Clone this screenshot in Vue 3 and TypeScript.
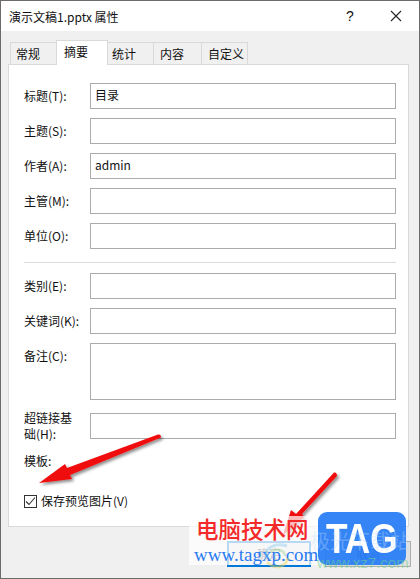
<script setup lang="ts">
interface Row { label: string; value?: string; tall?: boolean; wrap?: boolean }
const tabs: string[] = ['常规', '摘要', '统计', '内容', '自定义']
const top: Row[] = [
  { label: '标题(T):', value: '目录' },
  { label: '主题(S):' },
  { label: '作者(A):', value: 'admin' },
  { label: '主管(M):' },
  { label: '单位(O):' },
]
const bottom: Row[] = [
  { label: '类别(E):' },
  { label: '关键词(K):' },
  { label: '备注(C):', tall: true },
  { label: '超链接基础(H):', wrap: true },
]
</script>

<template>
  <div class="win">
    <header class="title">
      <span class="title-text">演示文稿1.pptx 属性</span>
      <span class="help">?</span>
      <svg class="close" width="12" height="12" viewBox="0 0 12 12"><path d="M1 1l10 10M11 1L1 11" stroke="#222" stroke-width="1.1" fill="none" /></svg>
    </header>
    <div class="body">
      <nav class="tabs">
        <div v-for="(t, i) in tabs" :key="t" class="tab" :class="{ active: i === 1 }">{{ t }}</div>
      </nav>
      <section class="panel">
        <div class="rows">
          <div v-for="r in top" :key="r.label" class="row">
            <label class="lab">{{ r.label }}</label>
            <div class="input">{{ r.value }}</div>
          </div>
        </div>
        <div class="divider"></div>
        <div class="rows">
          <div v-for="r in bottom" :key="r.label" class="row" :class="{ 'row-tall': r.tall, 'row-wrap': r.wrap }">
            <label class="lab">{{ r.label }}</label>
            <div class="input" :class="{ tall: r.tall }"></div>
          </div>
        </div>
        <div class="tmpl">模板:</div>
        <div class="check">
          <span class="box"><svg width="11" height="11" viewBox="0 0 11 11"><path d="M1 5.5l3 3 6-7" stroke="#333" stroke-width="1.1" fill="none" /></svg></span>
          <span>保存预览图片(V)</span>
        </div>
      </section>
      <footer class="foot">
        <div class="btn primary">确定</div>
        <div class="btn cancel">取消</div>
      </footer>
    </div>

    <svg class="arrows" width="420" height="579" viewBox="0 0 420 579">
      <defs>
        <filter id="sh" x="-20%" y="-20%" width="140%" height="140%"><feDropShadow dx="2" dy="2" stdDeviation="1.5" flood-color="#000" flood-opacity=".45" /></filter>
      </defs>
      <path d="M158 434.5Q161 434 161 437.5L70 475L72 479L39 483L65 464L67 468Z" fill="#f00d0d" filter="url(#sh)" />
      <path d="M334 472.5Q337 472 337 476L302 514L304 517L283 535L291 510L296 514Z" fill="#f00d0d" filter="url(#sh)" />
    </svg>

    <div class="mark">
      <div class="mark-cn">电脑技术网</div>
      <div class="mark-url">www.tagxp.com</div>
    </div>
    <div class="logo"><span class="logo-text">TAG</span></div>
    <svg class="swirl" width="28" height="32" viewBox="0 0 28 32">
      <path d="M24 6C10 2 0 10 4 18" stroke="#7cc4ee" stroke-width="3" fill="none" opacity=".4" />
      <path d="M4 22C12 30 22 28 25 18" stroke="#e9d65c" stroke-width="3" fill="none" opacity=".45" />
      <path d="M8 12C14 8 22 10 22 16" stroke="#8ed08a" stroke-width="2.5" fill="none" opacity=".4" />
    </svg>
    <div class="xz-cn">极光下载站</div>
    <div class="xz-url">www.xz7.com</div>
  </div>
</template>

<style scoped>
.win { width: 420px; height: 579px; box-sizing: border-box; position: relative; overflow: hidden; border: 1px solid #6b6b6b; background: #f0f0f0; font-family: "Noto Sans CJK SC", "Liberation Sans", sans-serif; font-size: 12px; color: #111; display: flex; flex-direction: column; }
.title { height: 30px; flex: none; background: #fff; display: flex; align-items: center; padding-left: 8px; font-size: 12px; }
.title-text { flex: 1; }
.help { width: 10px; font-size: 14px; font-family: "Liberation Sans", sans-serif; margin-right: 34px; }
.close { margin-right: 17px; }
.body { flex: 1; padding: 9px 10px 0 7px; display: flex; flex-direction: column; }
.tabs { display: flex; height: 25px; align-items: flex-end; padding-left: 2px; position: relative; z-index: 1; margin-bottom: -1px; flex: none; }
.tab { box-sizing: border-box; height: 22px; margin-bottom: 1px; border: 1px solid #d9d9d9; border-bottom: 0; line-height: 22px; background: #f0f0f0; margin-right: -1px; position: relative; }
.tab:nth-child(1) { width: 47px; padding-left: 5px; }
.tab:nth-child(2) { width: 52px; padding-left: 7px; }
.tab:nth-child(3) { width: 47px; padding-left: 4px; }
.tab:nth-child(4) { width: 49px; padding-left: 6px; }
.tab:nth-child(5) { width: 47px; padding-left: 6px; }
.tab.active { height: 25px; margin-bottom: 0; background: #fff; line-height: 21px; z-index: 1; }
.panel { box-sizing: border-box; height: 463px; background: #fff; border: 1px solid #d9d9d9; padding: 18px 12px 0 15px; flex: none; }
.rows { display: flex; flex-direction: column; gap: 9px; }
.row { display: flex; align-items: center; height: 26px; }
.row-tall { height: 57px; align-items: flex-start; margin-bottom: 4px; }
.row-tall .lab { margin-top: 5px; }
.lab { width: 66px; flex: none; line-height: 16px; }
.row-wrap .lab { width: 50px; margin-right: 16px; }
.input { box-sizing: border-box; flex: 1; height: 26px; border: 1px solid #ababab; background: #fff; padding: 0 4px; line-height: 22px; font-size: 12px; }
.input.tall { height: 57px; }
.divider { height: 1px; background: #dcdcdc; margin: 13px 0 10px; }
.tmpl { margin-top: 14px; height: 16px; line-height: 16px; }
.check { display: flex; align-items: center; gap: 4px; margin-top: 24px; line-height: 16px; }
.box { box-sizing: border-box; width: 13px; height: 13px; border: 1px solid #333; display: flex; align-items: center; justify-content: center; background: #fff; }
.foot { display: flex; justify-content: flex-end; gap: 14px; padding-top: 14px; margin-right: -2px; }
.btn { box-sizing: border-box; width: 84px; height: 26px; border: 1px solid #adadad; background: #e1e1e1; text-align: center; line-height: 24px; color: #444; }
.btn.cancel { width: 86px; }
.btn.primary { border: 2px solid #0078d7; line-height: 22px; }
.arrows { position: absolute; left: -1px; top: -1px; pointer-events: none; }
.mark { position: absolute; left: 188px; top: 515px; width: 129px; height: 49px; background: rgba(255,255,255,.72); padding-left: 7px; box-sizing: border-box; }
.mark-cn { font-size: 22.5px; font-weight: 500; color: #f42a2a; line-height: 24px; margin-bottom: 4px; white-space: nowrap; }
.mark-url { font-family: "Liberation Serif", serif; font-size: 19px; color: #2a7bf0; line-height: 22px; white-space: nowrap; margin-left: -2px; }
.logo { position: absolute; left: 317px; top: 511px; width: 88px; height: 53px; border-radius: 9px; background: rgba(40,125,246,.94); color: #fff; font-family: "Liberation Sans", sans-serif; font-weight: 700; font-size: 43px; line-height: 53px; text-align: center; }
.logo-text { display: inline-block; transform: scaleX(.82); }
.swirl { position: absolute; left: 262px; top: 539px; }
.xz-cn { position: absolute; left: 309px; top: 530px; font-size: 20px; line-height: 20px; color: rgba(190,220,250,.35); white-space: nowrap; }
.xz-url { position: absolute; left: 316px; top: 555px; font-family: "Liberation Sans", sans-serif; font-size: 15px; line-height: 14px; color: rgba(110,210,140,.55); white-space: nowrap; }
</style>
